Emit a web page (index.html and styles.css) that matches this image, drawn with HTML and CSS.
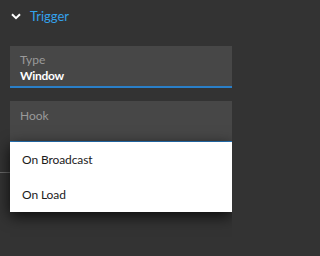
FILE: index.html
```html
<!DOCTYPE html>
<html>
<head>
<meta charset="utf-8">
<link rel="stylesheet" href="styles.css">
</head>
<body>
<div class="panel">
  <div class="section-head">
    <svg class="chev" width="10" height="7" viewBox="0 0 10 7"><path d="M1 1.2 L5 5.2 L9 1.2" fill="none" stroke="#fff" stroke-width="2"/></svg>
    <span class="section-title">Trigger</span>
  </div>
  <div class="field">
    <div class="label">Type</div>
    <div class="value">Window</div>
  </div>
  <div class="field hook">
    <div class="label">Hook</div>
    <div class="value"></div>
  </div>
  <div class="divider"></div>
  <div class="menu">
    <div class="item">On Broadcast</div>
    <div class="item">On Load</div>
  </div>
</div>
</body>
</html>
```
FILE: styles.css
```css
html, body {
  margin: 0;
  padding: 0;
  background: #333333;
  width: 232px;
  height: 256px;
  overflow: hidden;
  font-family: Lato, "Open Sans", sans-serif;
}
.panel {
  position: relative;
  height: 256px;
}
.section-head {
  display: flex;
  align-items: center;
  height: 32px;
  padding-left: 11px;
  gap: 9px;
}
.chev {
  display: block;
}
.section-title {
  color: #33a2ec;
  font-size: 13px;
}
.field {
  margin: 14px 0 0 10px;
  background: #474747;
  border-bottom: 2px solid #2a7fc8;
  padding: 6px 10px 0;
  box-sizing: content-box;
  height: 34px;
}
.field.hook {
  margin-top: 13px;
  height: 33px;
  padding-top: 7px;
}
.label {
  color: #9a9a9a;
  font-size: 12px;
  line-height: 16px;
}
.value {
  color: #ffffff;
  font-size: 12px;
  font-weight: 700;
  letter-spacing: -0.3px;
  line-height: 16px;
}
.divider {
  margin-top: 29px;
  height: 1px;
  background: #6a6a6a;
}
.menu {
  position: absolute;
  top: 142px;
  left: 10px;
  right: 0;
  background: #ffffff;
  box-shadow: 0 4px 14px rgba(0, 0, 0, 0.8);
}
.item {
  height: 35px;
  line-height: 35px;
  padding-left: 12px;
  font-size: 12px;
  letter-spacing: -0.1px;
  color: #1b1b1b;
}
```
